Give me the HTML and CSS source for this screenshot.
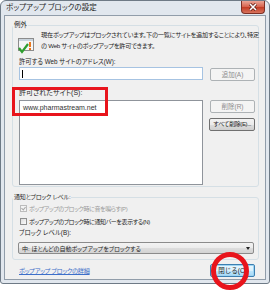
FILE: index.html
```html
<!DOCTYPE html>
<html lang="ja">
<head>
    <meta charset="UTF-8">
    <title>ポップアップ ブロックの設定</title>
    <link rel="stylesheet" href="styles.css">
</head>
<body>

<div class="window">
    <div class="titlebar">
        <span class="title">ポップアップ ブロックの設定</span>
        <div class="close-btn">
            <svg width="10" height="8" viewBox="0 0 10 8">
                <path d="M2 1 L8 7 M8 1 L2 7" stroke="#5a1a10" stroke-width="3" />
                <path d="M2 1 L8 7 M8 1 L2 7" stroke="#fff" stroke-width="1.6" />
            </svg>
        </div>
    </div>

    <div class="client">
        <!-- 例外 -->
        <fieldset class="group group-exceptions">
            <legend>例外</legend>
            <div class="group-body">
                <div class="info">
                    <svg class="info-icon" width="18" height="17" viewBox="0 0 18 17">
                        <rect x="1.5" y="1.5" width="15" height="12" fill="#f6f6f6" stroke="#8c8c8c" />
                        <rect x="2" y="2" width="14" height="2" fill="#c9d3dc" />
                        <rect x="12" y="5" width="2" height="5" fill="#e8781e" />
                        <rect x="12" y="11" width="2" height="2" fill="#e8781e" />
                        <path d="M2 11 L5 15 L11 7" fill="none" stroke="#2f9e2f" stroke-width="2.2" />
                    </svg>
                    <p class="info-text">現在ポップアップはブロックされています。下の一覧にサイトを追加することにより、特定<br>の Web サイトのポップアップを許可できます。</p>
                </div>

                <label class="field-label label-address" for="address">許可する Web サイトのアドレス(W):</label>
                <div class="row row-address">
                    <div class="textbox" id="address"><span class="caret"></span></div>
                    <button class="btn" disabled>追加(A)</button>
                </div>

                <label class="field-label label-sites">許可されたサイト(S):</label>
                <div class="row row-sites">
                    <div class="listbox">
                        <div class="list-item">www.pharmastream.net</div>
                    </div>
                    <div class="btn-col">
                        <button class="btn" disabled>削除(R)</button>
                        <button class="btn btn-wide">すべて削除(E)...</button>
                    </div>
                </div>
            </div>
        </fieldset>

        <!-- 通知とブロック レベル -->
        <fieldset class="group group-level">
            <legend>通知とブロック レベル:</legend>
            <div class="group-body">
                <div class="check-row disabled">
                    <span class="checkbox checked"></span>
                    <span>ポップアップのブロック時に音を鳴らす(P)</span>
                </div>
                <div class="check-row">
                    <span class="checkbox"></span>
                    <span>ポップアップのブロック時に通知バーを表示する(N)</span>
                </div>
                <div class="field-label label-level">ブロック レベル(B):</div>
                <div class="select">
                    <span>中: ほとんどの自動ポップアップをブロックする</span>
                    <span class="arrow"></span>
                </div>
            </div>
        </fieldset>

        <div class="footer">
            <a href="#" class="link">ポップアップ ブロックの詳細</a>
            <button class="btn btn-default">閉じる(C)</button>
        </div>
    </div>
</div>

<!-- 注釈 -->
<div class="mark-box"></div>
<div class="mark-circle"></div>

</body>
</html>
```

FILE: styles.css
```css
body {
    margin: 0;
    width: 270px;
    height: 290px;
    overflow: hidden;
    background-color: #fff;
    position: relative;
    font-family: "Liberation Sans", "Noto Sans CJK JP", sans-serif;
    font-feature-settings: "palt";
    font-size: 6.5px;
    color: #1e1e1e;
}

.window {
    box-sizing: border-box;
    width: 270px;
    height: 284px;
    border: 1px solid #6e7a86;
    border-radius: 6px 6px 3px 3px;
    background-color: #e1e7ee;
    padding: 0 3px 3px;
    display: flex;
    flex-direction: column;
}

.titlebar {
    height: 14px;
    display: flex;
    align-items: flex-start;
}

.title {
    font-size: 7.5px;
    line-height: 14px;
    margin-left: 2px;
    color: #1a1a1a;
}

.close-btn {
    margin-left: auto;
    margin-right: 1px;
    width: 22px;
    height: 12px;
    border: 1px solid #7d2f24;
    border-top: none;
    border-radius: 0 0 4px 4px;
    background: linear-gradient(#eaa596, #d6604a 50%, #c23a22 51%, #d8725c);
    display: flex;
    align-items: center;
    justify-content: center;
}

.client {
    flex: 1;
    border: 1px solid #919daa;
    background-color: #f0f0f0;
    padding-top: 5px;
    display: flex;
    flex-direction: column;
}

/* グループボックス */
.group {
    margin: 0 6px 0 7px;
    padding: 0;
    border: 1px solid #d5dfe5;
    border-radius: 3px;
    min-width: 0;
}

.group legend {
    padding: 0 1px;
    margin-left: 0;
    line-height: 8px;
    font-size: 6.5px;
}

.group-body {
    padding: 0 3px 0 6px;
}

.group-exceptions .group-body {
    padding-bottom: 1px;
}

.info {
    height: 28px;
    display: flex;
}

.info-icon {
    flex: none;
    margin: 8px 0 0 -2px;
}

.info-text {
    margin: 0 0 0 6px;
    line-height: 11px;
    font-size: 6.2px;
    letter-spacing: -0.25px;
    white-space: nowrap;
}

.field-label {
    display: block;
    line-height: 10px;
    height: 10px;
}

.label-address {
    font-size: 6.3px;
}

.label-sites {
    font-size: 7px;
}

.row {
    display: flex;
    justify-content: space-between;
}

.row-address {
    height: 14px;
}

.textbox {
    box-sizing: border-box;
    width: 184px;
    height: 13px;
    background-color: #fff;
    border: 1px solid #a6c3e2;
    display: flex;
    align-items: center;
    padding-left: 2px;
}

.caret {
    width: 1px;
    height: 8px;
    background-color: #000;
}

.row-address .btn {
    margin-top: 1px;
}

.label-sites {
    margin-top: 7px;
}

.row-sites {
    margin-top: 2px;
}

.listbox {
    box-sizing: border-box;
    width: 184px;
    height: 85px;
    background-color: #fff;
    border: 1px solid #8f949b;
    padding: 1px 3px;
}

.list-item {
    font-size: 7px;
    line-height: 11px;
    color: #333;
}

.btn-col {
    display: flex;
    flex-direction: column;
    gap: 5px;
}

.btn {
    box-sizing: border-box;
    width: 45px;
    height: 13px;
    padding: 0;
    font-family: inherit;
    font-size: 6.5px;
    line-height: 11px;
    color: #1e1e1e;
    border: 1px solid #707070;
    border-radius: 2px;
    background: linear-gradient(#f2f2f2, #ebebeb 50%, #dddddd 51%, #cfcfcf);
    white-space: nowrap;
}

.btn:disabled {
    color: #8d8d8d;
    border-color: #adb2b5;
    background: #f4f4f4;
}

.btn-wide {
    width: 46px;
    margin-left: -1px;
    font-size: 6px;
    letter-spacing: -0.4px;
}

/* 通知とブロック レベル */
.group-level {
    margin-top: 6px;
}

.group-level legend {
    font-size: 6px;
    letter-spacing: -0.2px;
}

.group-level .group-body {
    padding-top: 1px;
    padding-bottom: 5px;
}

.check-row {
    display: flex;
    align-items: center;
    gap: 2px;
    height: 13px;
    margin-left: 1px;
    font-size: 6px;
    letter-spacing: -0.4px;
}

.check-row.disabled {
    color: #9a9a9a;
}

.checkbox {
    box-sizing: border-box;
    width: 7px;
    height: 7px;
    border: 1px solid #8e8f8f;
    background: linear-gradient(135deg, #dcdcdc, #fbfbfb);
    position: relative;
}

.check-row.disabled .checkbox {
    border-color: #bcbcbc;
    background: #f4f4f4;
}

.checkbox.checked::after {
    content: "";
    position: absolute;
    left: 1px;
    top: 0;
    width: 2px;
    height: 3px;
    border: solid #a8a8a8;
    border-width: 0 1px 1px 0;
    transform: rotate(40deg);
}

.label-level {
    margin-bottom: 4px;
    font-size: 6.3px;
}

.select {
    box-sizing: border-box;
    width: 236px;
    height: 12px;
    margin-left: -1px;
    border: 1px solid #8b8b8b;
    border-radius: 2px;
    background: linear-gradient(#f3f3f3, #ebebeb 50%, #dddddd 51%, #d3d3d3);
    display: flex;
    align-items: center;
    padding: 0 3px;
    font-size: 6px;
}

.arrow {
    margin-left: auto;
    width: 0;
    height: 0;
    border-left: 2px solid transparent;
    border-right: 2px solid transparent;
    border-top: 3px solid #222;
}

.footer {
    margin-top: 4px;
    padding: 0 10px 0 14px;
    display: flex;
    justify-content: space-between;
    align-items: center;
}

.link {
    color: #3d6fc9;
    text-decoration: underline;
    font-size: 6.2px;
    letter-spacing: -0.3px;
}

.btn-default {
    border-color: #3c7fb1;
    background: linear-gradient(#eaf6fd, #d9f0fc 50%, #bee6fd 51%, #a7d9f5);
    box-shadow: inset 0 0 0 1px #9ed4f2;
}

/* 赤い注釈 */
.mark-box {
    position: absolute;
    left: 12px;
    top: 87px;
    width: 90px;
    height: 23px;
    border: 3px solid #e8141c;
}

.mark-circle {
    position: absolute;
    left: 211px;
    top: 252px;
    width: 28px;
    height: 28px;
    border: 5px solid #e8141c;
    border-radius: 50%;
}
```
